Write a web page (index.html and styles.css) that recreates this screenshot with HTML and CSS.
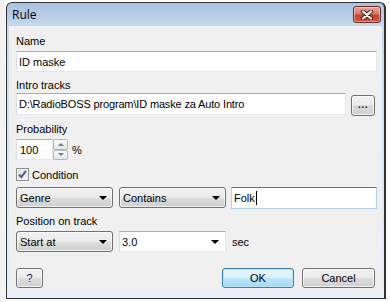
FILE: index.html
```html
<!DOCTYPE html>
<html lang="en">
<head>
  <meta charset="UTF-8">
  <title>Rule</title>
  <link rel="stylesheet" href="styles.css">
</head>
<body>
  <div class="desktop">
    <div class="window">
      <div class="titlebar">
        <span class="title">Rule</span>
        <div class="close">
          <svg width="14" height="10" viewBox="0 0 14 10">
            <path d="M3 1.5 L11 8.5 M11 1.5 L3 8.5" stroke="#5a2018" stroke-width="4.2" stroke-linecap="round"/>
            <path d="M3 1.5 L11 8.5 M11 1.5 L3 8.5" stroke="#fff" stroke-width="2.2" stroke-linecap="round"/>
          </svg>
        </div>
      </div>
      <div class="frame">
        <div class="client">
          <div class="label first">Name</div>
          <div class="edit name-edit">ID maske</div>

          <div class="label">Intro tracks</div>
          <div class="row path-row">
            <div class="edit path-edit">D:\RadioBOSS program\ID maske za Auto Intro</div>
            <div class="btn browse-btn">...</div>
          </div>

          <div class="label">Probability</div>
          <div class="row spin-row">
            <div class="edit spin-edit">100</div>
            <div class="spin">
              <div class="spin-btn"><span class="arr up"></span></div>
              <div class="spin-btn"><span class="arr down"></span></div>
            </div>
            <span class="unit">%</span>
          </div>

          <div class="row check-row">
            <div class="checkbox">
              <svg width="11" height="11" viewBox="0 0 11 11">
                <path d="M2 5.5 L4.3 8.2 L9 1.8" fill="none" stroke="#4a5f97" stroke-width="2"/>
              </svg>
            </div>
            <span>Condition</span>
          </div>

          <div class="row combo-row">
            <div class="combo genre">Genre<span class="tri"></span></div>
            <div class="combo contains">Contains<span class="tri"></span></div>
            <div class="edit focus folk">Folk<span class="caret"></span></div>
          </div>

          <div class="label">Position on track</div>
          <div class="row combo-row second">
            <div class="combo genre">Start at<span class="tri"></span></div>
            <div class="edit ecombo">3.0<span class="tri"></span></div>
            <span class="unit sec">sec</span>
          </div>

          <div class="row button-row">
            <div class="btn help-btn">?</div>
            <div class="btn default ok-btn">OK</div>
            <div class="btn cancel-btn">Cancel</div>
          </div>
        </div>
      </div>
    </div>
  </div>
</body>
</html>
```

FILE: styles.css
```css
body {
  margin: 0;
  background: #fff;
  font-family: "Liberation Sans", Arial, sans-serif;
  font-size: 11px;
  color: #000;
}

.desktop {
  width: 390px;
  height: 302px;
  overflow: hidden;
  position: relative;
  background: linear-gradient(to right, #f2f2f2 5px, #fff 5px);
}

/* the dialog window sits on the desktop */
.window {
  position: absolute;
  left: 6px;
  top: 2px;
  width: 377px;
  border: 1px solid #2e3238;
  border-right-width: 2px;
  border-radius: 6px 6px 0 0;
  background: linear-gradient(#a9c2df, #c6d9ee 24px, #dbe7f4 60%, #e9f0f8);
}

.titlebar {
  height: 23px;
  display: flex;
  justify-content: space-between;
  align-items: flex-start;
  border-radius: 6px 6px 0 0;
}

.title {
  font-family: "Open Sans", sans-serif;
  font-size: 12px;
  line-height: 23px;
  padding-left: 5px;
  color: #000;
}

.close {
  width: 28px;
  height: 17px;
  margin: 3px 3px 0 0;
  box-sizing: border-box;
  border: 1px solid #6b2a24;
  border-radius: 3px;
  background: linear-gradient(#e8a99d, #d47866 45%, #c2422e 55%, #cc5a40);
  box-shadow: inset 0 0 0 1px rgba(255, 220, 210, 0.5);
  display: flex;
  align-items: center;
  justify-content: center;
}

.frame {
  padding: 0 2px 7px 2px;
}

.client {
  height: 265px;
  box-sizing: border-box;
  background: #f0f0f0;
  padding: 0 5px 0 7px;
  overflow: hidden;
}

.label {
  line-height: 13px;
  margin-top: 7px;
}

.label.first {
  margin-top: 9px;
}

.row {
  display: flex;
  align-items: center;
}

.edit {
  box-sizing: border-box;
  background: #fff;
  border: 1px solid #e3e9ef;
  border-top-color: #abadb3;
  border-left-color: #dbdfe6;
  padding-left: 2px;
  display: flex;
  align-items: center;
  position: relative;
}

.name-edit {
  width: 361px;
  height: 21px;
  margin-top: 3px;
}

.path-row {
  margin-top: 1px;
  height: 23px;
  align-items: flex-start;
}

.path-edit {
  width: 330px;
  height: 22px;
  letter-spacing: -0.15px;
}

.btn {
  box-sizing: border-box;
  border: 1px solid #707070;
  border-radius: 3px;
  background: linear-gradient(#f2f2f2, #ebebeb 50%, #dddddd 50%, #cfcfcf);
  box-shadow: inset 0 0 0 1px rgba(255, 255, 255, 0.7);
  display: flex;
  align-items: center;
  justify-content: center;
}

.browse-btn {
  width: 24px;
  height: 21px;
  margin: 2px 0 0 5px;
  color: #1c2a66;
  font-weight: bold;
  letter-spacing: 0.5px;
  padding-bottom: 3px;
}

.spin-row {
  margin-top: 3px;
  height: 21px;
}

.spin-edit {
  width: 37px;
  height: 21px;
  padding-left: 3px;
}

.spin {
  width: 15px;
  height: 21px;
  display: flex;
  flex-direction: column;
}

.spin-btn {
  flex: 1;
  box-sizing: border-box;
  border: 1px solid #b5b5b5;
  border-radius: 2px;
  background: linear-gradient(#fbfbfb, #e6e6e6);
  display: flex;
  align-items: center;
  justify-content: center;
}

.arr {
  width: 0;
  height: 0;
  border-left: 3px solid transparent;
  border-right: 3px solid transparent;
}

.arr.up {
  border-bottom: 3px solid #5a7dac;
}

.arr.down {
  border-top: 3px solid #5a7dac;
}

.unit {
  margin-left: 4px;
}

.check-row {
  margin-top: 7px;
  height: 15px;
}

.checkbox {
  width: 13px;
  height: 13px;
  box-sizing: border-box;
  border: 1px solid #8e8f8f;
  background: linear-gradient(135deg, #dcdcdc, #fbfbfb);
  box-shadow: inset 0 0 0 1px #f4f4f4;
  display: flex;
  align-items: center;
  justify-content: center;
  margin-right: 3px;
}

.combo-row {
  margin-top: 5px;
  height: 21px;
}

.combo-row.second {
  margin-top: 3px;
}

.combo {
  box-sizing: border-box;
  height: 21px;
  border: 1px solid #707070;
  border-radius: 3px;
  background: linear-gradient(#f2f2f2, #ebebeb 50%, #dddddd 50%, #cfcfcf);
  box-shadow: inset 0 0 0 1px rgba(255, 255, 255, 0.7);
  padding-left: 3px;
  display: flex;
  align-items: center;
  position: relative;
}

.genre {
  width: 97px;
}

.contains {
  width: 107px;
  margin-left: 6px;
}

.tri {
  position: absolute;
  right: 5px;
  top: 8px;
  width: 0;
  height: 0;
  border-left: 4px solid transparent;
  border-right: 4px solid transparent;
  border-top: 4px solid #000;
}

.folk {
  width: 146px;
  height: 22px;
  margin-left: 5px;
  border-color: #b5cfe7;
  border-top-color: #3d7bad;
  align-self: flex-start;
}

.caret {
  width: 1px;
  height: 14px;
  background: #000;
  margin-left: 1px;
}

.ecombo {
  width: 107px;
  height: 21px;
  margin-left: 6px;
}

.ecombo .tri {
  right: 6px;
}

.sec {
  margin-left: 6px;
}

.button-row {
  margin-top: 16px;
  height: 20px;
}

.button-row .btn {
  height: 20px;
}

.help-btn {
  width: 27px;
  color: #1c2a66;
}

.ok-btn {
  width: 72px;
  margin-left: auto;
}

.btn.default {
  border-color: #3c7fb1;
  background: linear-gradient(#eaf6fd, #d9f0fc 50%, #bee6fd 50%, #a7d9f5);
  box-shadow: inset 0 0 0 1px #b6e3f8;
}

.cancel-btn {
  width: 73px;
  margin: 0 2px 0 8px;
}
```
